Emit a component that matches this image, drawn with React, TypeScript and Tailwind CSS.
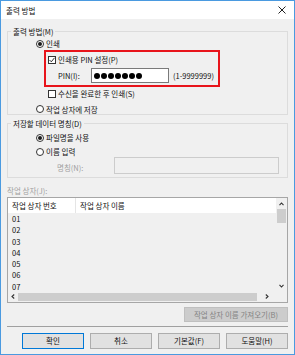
import React from 'react';

const font = "font-['Noto_Sans_CJK_KR','Noto_Sans',sans-serif]";

const Radio: React.FC<{ checked?: boolean; label: string }> = ({ checked, label }) => (
  <div className='flex items-center h-[11px]'>
    <span className='w-[8px] h-[8px] rounded-full border border-[#333] bg-white flex items-center justify-center'>
      {checked && <span className='w-[4px] h-[4px] rounded-full bg-[#1a1a1a]' />}
    </span>
    <span className='ml-[2px]'>{label}</span>
  </div>
);

const Check: React.FC<{ checked?: boolean; label: string }> = ({ checked, label }) => (
  <div className='flex items-center h-[11px]'>
    <span className='w-[8px] h-[8px] border border-[#333] bg-white flex items-center justify-center'>
      {checked && (
        <svg width='6' height='6' viewBox='0 0 6 6'>
          <path d='M0.5 3 L2.3 4.8 L5.5 0.8' fill='none' stroke='#1a1a1a' strokeWidth='0.9' />
        </svg>
      )}
    </span>
    <span className='ml-[2px]'>{label}</span>
  </div>
);

const Group: React.FC<{ label: string; className?: string; children: React.ReactNode }> = ({ label, className, children }) => (
  <div className={`relative border border-[#dcdcdc] ${className ?? ''}`}>
    {/* 그룹 제목은 테두리 위에 겹침 */}
    <span className='absolute -top-[6px] left-[3px] px-[2px] leading-[11px] bg-[#f0f0f0]'>{label}</span>
    {children}
  </div>
);

const rows = ['01', '02', '03', '04', '05', '06', '07'];

const Button: React.FC<{ label: string; primary?: boolean }> = ({ label, primary }) => (
  <div
    className={`w-[62px] h-[16px] flex items-center justify-center bg-[#e1e1e1] border ${
      primary ? 'border-[#0078d7]' : 'border-[#adadad]'
    }`}
  >
    {label}
  </div>
);

const App: React.FC = () => {
  return (
    <div className={`w-[295px] h-[355px] flex flex-col border border-[#4a9ae0] bg-[#f0f0f0] text-[7.5px] leading-[11px] text-[#111] ${font}`}>
      {/* 타이틀 바 */}
      <div className='h-[18px] bg-white flex items-center justify-between pl-[5px] pr-[8px]'>
        <span>출력 방법</span>
        <svg width='8' height='8' viewBox='0 0 8 8'>
          <path d='M0.5 0.5 L7.5 7.5 M7.5 0.5 L0.5 7.5' stroke='#222' strokeWidth='1' />
        </svg>
      </div>

      <div className='flex-1 flex flex-col px-[6px]'>
        {/* 출력 방법 */}
        <Group label='출력 방법(M)' className='mt-[12px]'>
          <div className='flex flex-col pl-[28px] pt-[6px]'>
            <Radio checked label='인쇄' />
            <div className='mt-[1px] ml-[8px] w-[176px] border-2 border-[#e8141b] flex flex-col pt-[2px] pb-[2px] pl-[2px]'>
              <Check checked label='인쇄용 PIN 설정(P)' />
              <div className='mt-[3px] h-[15px] flex items-center pl-[10px]'>
                <span className='w-[33px]'>PIN(I):</span>
                <div className='w-[78px] h-[15px] bg-white border border-[#7a7a7a] flex items-center pl-[2px] gap-[1px]'>
                  {rows.map((r) => (
                    <span key={r} className='w-[6px] h-[6px] rounded-full bg-black' />
                  ))}
                </div>
                <span className='ml-[4px]'>(1-9999999)</span>
              </div>
            </div>
            <div className='mt-[1px] ml-[12px]'>
              <Check label='수신을 완료한 후 인쇄(S)' />
            </div>
            <div className='mt-[5px] h-[10px] flex items-center'>
              <Radio label='작업 상자에 저장' />
            </div>
          </div>
        </Group>

        {/* 저장할 데이터 명칭 */}
        <Group label='저장할 데이터 명칭(D)' className='mt-[8px]'>
          <div className='flex flex-col pl-[28px] pt-[8px] pb-[3px]'>
            <Radio checked label='파일명을 사용' />
            <div className='mt-[3px]'>
              <Radio label='이름 입력' />
            </div>
            <div className='h-[17px] flex items-center pl-[21px] pr-[8px]'>
              <span className='w-[57px] mt-[3px] text-[#a0a0a0]'>명칭(N):</span>
              <div className='flex-1 h-[17px] border border-[#cccccc] bg-[#f0f0f0]' />
            </div>
          </div>
        </Group>

        {/* 작업 상자 */}
        <div className='mt-[7px] h-[11px] text-[#a0a0a0]'>작업 상자(J):</div>
        <div className='mt-[1px] border border-[#a6a6a6] flex flex-col'>
          <div className='flex'>
            <div className='flex-1 flex flex-col'>
              <div className='h-[15px] flex bg-white'>
                <div className='w-[68px] pl-[4px] flex items-center border-r border-[#e5e5e5]'>작업 상자 번호</div>
                <div className='flex-1 pl-[4px] flex items-center'>작업 상자 이름</div>
              </div>
              {rows.map((r) => (
                <div key={r} className='h-[11.25px] pl-[4px] flex items-center'>
                  {r}
                </div>
              ))}
            </div>
            <div className='w-[11px] flex flex-col bg-[#f0f0f0]'>
              <div className='h-[11px] flex items-center justify-center'>
                <svg width='5' height='4' viewBox='0 0 5 4'>
                  <path d='M0.5 3.2 L2.5 1 L4.5 3.2' fill='none' stroke='#333' strokeWidth='1.1' />
                </svg>
              </div>
              <div className='h-[14px] mx-[1px] bg-[#cdcdcd]' />
              <div className='flex-1' />
              <div className='h-[11px] flex items-center justify-center'>
                <svg width='5' height='4' viewBox='0 0 5 4'>
                  <path d='M0.5 0.8 L2.5 3 L4.5 0.8' fill='none' stroke='#333' strokeWidth='1.1' />
                </svg>
              </div>
            </div>
          </div>
          <div className='h-[10px] flex'>
            <div className='flex-1 flex items-center'>
              <div className='w-[10px] flex justify-center'>
                <svg width='4' height='5' viewBox='0 0 4 5'>
                  <path d='M3.2 0.5 L1 2.5 L3.2 4.5' fill='none' stroke='#333' strokeWidth='1.1' />
                </svg>
              </div>
              <div className='w-[239px] h-[8px] bg-[#cdcdcd]' />
              <div className='flex-1 flex justify-center'>
                <svg width='4' height='5' viewBox='0 0 4 5'>
                  <path d='M0.8 0.5 L3 2.5 L0.8 4.5' fill='none' stroke='#333' strokeWidth='1.1' />
                </svg>
              </div>
            </div>
            <div className='w-[11px] bg-[#f0f0f0]' />
          </div>
        </div>

        <div className='mt-[4px] flex justify-end'>
          <div className='w-[104px] h-[15px] flex items-center justify-center bg-[#cccccc] border border-[#bfbfbf] text-[#838383]'>
            작업 상자 이름 가져오기(B)
          </div>
        </div>

        <div className='mt-[4px] h-[1px] bg-[#a0a0a0]' />

        <div className='mt-[6px] flex justify-end gap-[6px]'>
          <Button primary label='확인' />
          <Button label='취소' />
          <Button label='기본값(F)' />
          <Button label='도움말(H)' />
        </div>
      </div>
    </div>
  );
};

export default App;
